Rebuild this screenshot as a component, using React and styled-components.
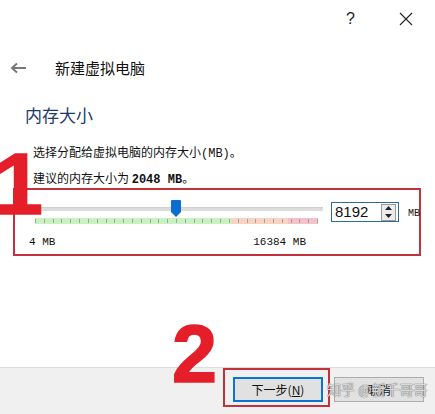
import React from "react";
import styled, { createGlobalStyle } from "styled-components";

const Global = createGlobalStyle`
  html, body { margin: 0; padding: 0; background: #fff; }
  body { font-family: "Noto Sans CJK SC", "Noto Sans", sans-serif; }
`;

const Page = styled.div`
  position: relative;
  width: 435px;
  height: 414px;
  overflow: hidden;
  background: #fff;
  display: flex;
  flex-direction: column;
`;

const TitleBar = styled.div`
  height: 38px;
  display: flex;
  justify-content: flex-end;
  align-items: center;
  padding-right: 22px;
  gap: 44px;
  color: #222;
`;

const Help = styled.span`
  font-family: "Liberation Sans", sans-serif;
  font-size: 16px;
  line-height: 16px;
`;

const Header = styled.div`
  margin-top: 20px;
  height: 20px;
  display: flex;
  align-items: center;
  padding-left: 10px;
  gap: 29px;
`;

const HeaderTitle = styled.span`
  font-size: 15px;
  line-height: 20px;
  color: #111;
`;

const SectionTitle = styled.div`
  margin-top: 27px;
  padding-left: 25px;
  font-size: 17px;
  line-height: 20px;
  color: #1d3a6b;
`;

const Description = styled.div`
  margin-top: 19px;
  padding-left: 33px;
  display: flex;
  flex-direction: column;
  gap: 8px;
  font-size: 12px;
  line-height: 16px;
  color: #111;
`;

const Mono = styled.span`
  font-family: "Liberation Mono", monospace;
  font-size: 12px;
  font-weight: ${(p) => (p.$bold ? 700 : 400)};
`;

const MarkBox = styled.div`
  margin-left: 13px;
  width: 404px;
  height: 64px;
  border: 2px solid #c2323c;
  display: flex;
  align-items: flex-start;
`;

const SliderArea = styled.div`
  flex: 0 0 294px;
  margin-left: 14px;
  margin-top: 10px;
  display: flex;
  flex-direction: column;
`;

const Track = styled.div`
  position: relative;
  height: 18px;
`;

const Groove = styled.div`
  margin-top: 7px;
  height: 3px;
  background: #dcdcdc;
  border-top: 1px solid #d0d0d0;
`;

const Thumb = styled.svg`
  position: absolute;
  top: 0;
  left: ${(p) => p.$left}px;
`;

const TickBar = styled.div`
  margin-left: 6px;
  width: 283px;
  height: 6px;
  display: flex;
  justify-content: space-between;
  align-items: center;
  background: linear-gradient(
    to right,
    #c9f1c1 0%,
    #c9f1c1 69.6%,
    #f9d3c3 69.6%,
    #f9d3c3 89.4%,
    #f6c2c9 89.4%,
    #f6c2c9 100%
  );
`;

const Tick = styled.span`
  width: 1px;
  height: 4px;
  background: #9aa89a;
`;

const Labels = styled.div`
  margin-top: 12px;
  padding-right: 17px;
  display: flex;
  justify-content: space-between;
  font-family: "Liberation Mono", monospace;
  font-size: 11px;
  line-height: 12px;
  color: #111;
`;

const SpinBox = styled.div`
  flex: 0 0 68px;
  box-sizing: border-box;
  margin-left: 8px;
  margin-top: 12px;
  height: 20px;
  border: 1px solid #2a6c9e;
  display: flex;
  align-items: center;
  justify-content: space-between;
  padding-left: 3px;
  padding-right: 2px;
`;

const SpinValue = styled.span`
  font-family: "Liberation Sans", sans-serif;
  font-size: 15px;
  line-height: 18px;
  color: #111;
`;

const SpinButtons = styled.div`
  width: 13px;
  height: 15px;
  border: 1px solid #9a9a9a;
  background: #ececec;
  display: flex;
  flex-direction: column;
  align-items: center;
  justify-content: space-around;
`;

const Unit = styled.span`
  flex: 0 0 auto;
  margin-left: 9px;
  margin-top: 18px;
  font-family: "Liberation Mono", monospace;
  font-size: 10px;
  line-height: 12px;
  color: #111;
`;

const Footer = styled.div`
  margin-top: auto;
  height: 46px;
  border-top: 1px solid #dcdcdc;
  background: #f0f0f0;
  display: flex;
  justify-content: flex-end;
  align-items: flex-start;
  padding-right: 11px;
`;

const ButtonMark = styled.div`
  box-sizing: border-box;
  width: 107px;
  height: 39px;
  border: 2px solid #c2323c;
  padding: 7px 5px 3px 8px;
  display: flex;
`;

const Button = styled.div`
  width: 90px;
  height: 25px;
  box-sizing: border-box;
  display: flex;
  align-items: center;
  justify-content: center;
  background: #e1e1e1;
  border: ${(p) => (p.$primary ? "2px solid #0a74d0" : "1px solid #adadad")};
  margin-top: ${(p) => (p.$primary ? 0 : 9)}px;
  margin-left: ${(p) => (p.$primary ? 0 : 4)}px;
  font-size: 12px;
  color: #111;
`;

const Watermark = styled.span`
  position: absolute;
  left: 327px;
  top: 380px;
  font-size: 14px;
  line-height: 18px;
  color: rgba(255, 255, 255, 0.75);
  text-shadow: 0 0 1px rgba(90, 90, 90, 0.9), 0 0 1px rgba(90, 90, 90, 0.9);
  white-space: nowrap;
  pointer-events: none;
`;

const BigNumber = styled.span`
  position: absolute;
  left: ${(p) => p.$left}px;
  top: ${(p) => p.$top}px;
  font-family: "Liberation Sans", sans-serif;
  font-weight: 700;
  font-size: ${(p) => p.$size}px;
  line-height: ${(p) => p.$size}px;
  color: #e41f2a;
  -webkit-text-stroke: 1.5px #e41f2a;
`;

const ticks = Array.from({ length: 33 });

export default function App() {
  return (
    <Page>
      <Global />
      <TitleBar>
        <Help>?</Help>
        <svg width="14" height="14" viewBox="0 0 14 14">
          <path d="M1 1 L13 13 M13 1 L1 13" stroke="#222" strokeWidth="1.1" />
        </svg>
      </TitleBar>
      <Header>
        <svg width="16" height="12" viewBox="0 0 16 12">
          <path d="M16 6 H3 M7 1.5 L2 6 L7 10.5" stroke="#777" strokeWidth="2" fill="none" />
        </svg>
        <HeaderTitle>新建虚拟电脑</HeaderTitle>
      </Header>
      <SectionTitle>内存大小</SectionTitle>
      <Description>
        <span>
          选择分配给虚拟电脑的内存大小<Mono>(MB)</Mono>。
        </span>
        <span>
          建议的内存大小为 <Mono $bold>2048 MB</Mono>。
        </span>
      </Description>
      <MarkBox>
        <SliderArea>
          <Track>
            <Groove />
            <Thumb $left={142} width="10" height="17" viewBox="0 0 10 17">
              <path d="M1 0 H9 Q10 0 10 1 V12 L5 17 L0 12 V1 Q0 0 1 0 Z" fill="#0a6fcf" />
            </Thumb>
          </Track>
          <TickBar>
            {ticks.map((_, i) => (
              <Tick key={i} />
            ))}
          </TickBar>
          <Labels>
            <span>4 MB</span>
            <span>16384 MB</span>
          </Labels>
        </SliderArea>
        <SpinBox>
          <SpinValue>8192</SpinValue>
          <SpinButtons>
            <svg width="7" height="4" viewBox="0 0 7 4">
              <path d="M0 4 L3.5 0 L7 4 Z" fill="#222" />
            </svg>
            <svg width="7" height="4" viewBox="0 0 7 4">
              <path d="M0 0 L3.5 4 L7 0 Z" fill="#222" />
            </svg>
          </SpinButtons>
        </SpinBox>
        <Unit>MB</Unit>
      </MarkBox>
      <Footer>
        <ButtonMark>
          <Button $primary>
            下一步(<u>N</u>)
          </Button>
        </ButtonMark>
        <Button>取消</Button>
      </Footer>
      <Watermark>知乎 @新千哥哥</Watermark>
      <BigNumber $left={-6} $top={140} $size={88}>1</BigNumber>
      <BigNumber $left={172} $top={314} $size={81}>2</BigNumber>
    </Page>
  );
}
